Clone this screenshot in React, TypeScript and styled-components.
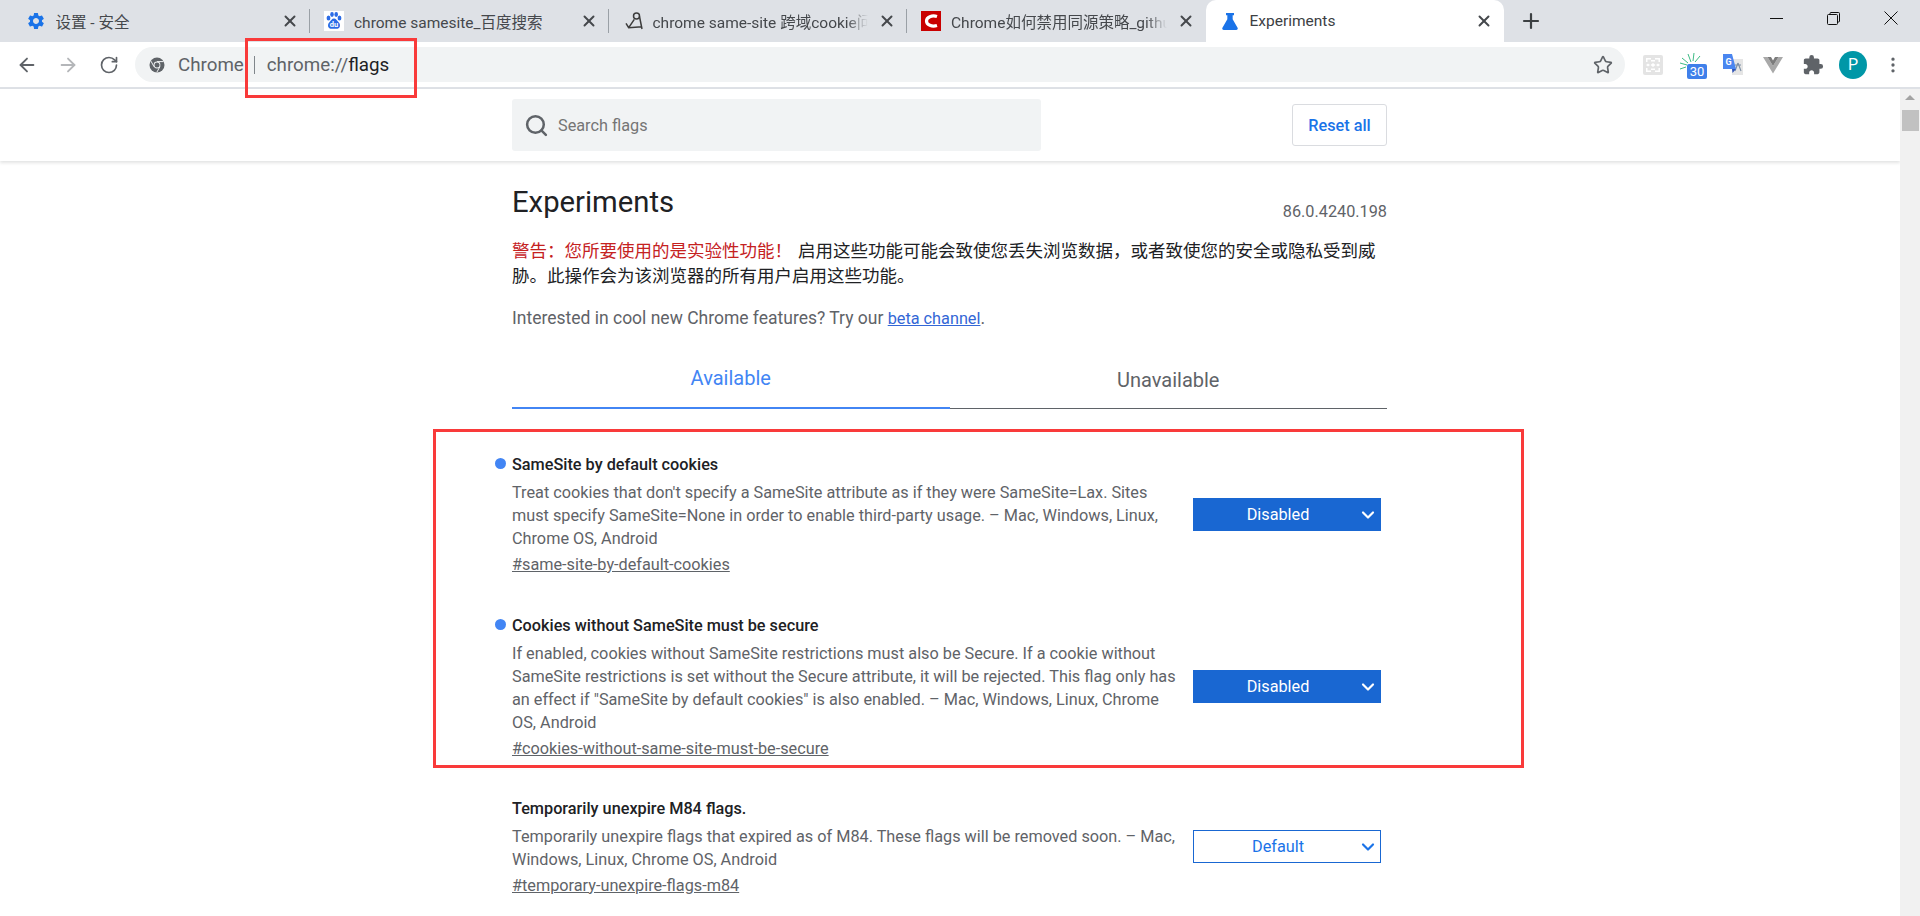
import React from "react";
import styled, { createGlobalStyle } from "styled-components";
import { ArrowLeft, ArrowRight, RotateCw, Star, X, Plus, Search, ChevronDown, EllipsisVertical } from "lucide-react";
import { MdSettings, MdExtension } from "react-icons/md";

const GlobalStyle = createGlobalStyle`
  html, body {
    margin: 0;
    padding: 0;
    background: #fff;
    overflow: hidden;
  }
  * { box-sizing: border-box; }
  body {
    font-family: Roboto, "Noto Sans CJK SC", sans-serif;
  }
`;

const Frame = styled.div`
  position: relative;
  width: 1920px;
  height: 916px;
  overflow: hidden;
  display: flex;
  flex-direction: column;
`;

const TabStrip = styled.div`
  height: 42px;
  background: #dee1e6;
  display: flex;
  align-items: flex-end;
  padding-left: 11.5px;
  flex: none;
`;

const Tab = styled.div<{ $active?: boolean; $sep?: boolean }>`
  position: relative;
  width: 298.5px;
  height: 42px;
  flex: none;
  display: flex;
  align-items: center;
  padding: 0 11px 0 14px;
  gap: 10px;
  font-size: 15.5px;
  color: ${(p) => (p.$active ? "#3c4043" : "#45484c")};
  background: ${(p) => (p.$active ? "#fff" : "transparent")};
  border-radius: ${(p) => (p.$active ? "10px 10px 0 0" : "0")};
  ${(p) =>
    p.$sep
      ? `
    &::after {
      content: "";
      position: absolute;
      right: 0;
      top: 9px;
      width: 1px;
      height: 24px;
      background: #9aa0a6;
    }
  `
      : ""}
`;

const TabIcon = styled.div`
  width: 20px;
  height: 20px;
  flex: none;
  display: flex;
  align-items: center;
  justify-content: center;
`;

const TabTitle = styled.div<{ $fade?: boolean }>`
  flex: 1;
  min-width: 0;
  white-space: nowrap;
  overflow: hidden;
  ${(p) =>
    p.$fade
      ? "mask-image: linear-gradient(to right, #000 90%, transparent 100%);"
      : ""}
`;

const TabClose = styled(X)`
  flex: none;
  color: #45484c;
`;

const NewTab = styled.div`
  width: 38px;
  height: 42px;
  margin-left: 8px;
  display: flex;
  align-items: center;
  justify-content: center;
  color: #3c4043;
`;

const WindowControls = styled.div`
  margin-left: auto;
  height: 36px;
  display: flex;
  align-items: center;
  padding-right: 22px;
  gap: 44px;
  align-self: flex-start;
`;

const Toolbar = styled.div`
  height: 47px;
  flex: none;
  background: #fff;
  border-bottom: 2px solid #dee1e6;
  display: flex;
  align-items: flex-start;
  padding: 5px 0 0 6.5px;
`;

const NavButton = styled.div<{ $dim?: boolean }>`
  width: 41px;
  height: 35px;
  display: flex;
  align-items: center;
  justify-content: center;
  color: ${(p) => (p.$dim ? "#b4b6b9" : "#5f6368")};
`;

const Omnibox = styled.div`
  margin-left: 5.5px;
  width: 1490px;
  height: 35px;
  background: #f1f3f4;
  border-radius: 18px;
  display: flex;
  align-items: center;
  padding: 0 12px 0 14px;
  font-size: 18.75px;
`;

const SecureLabel = styled.span`
  color: #5f6368;
  margin-left: 13px;
  padding-top: 1px;
`;

const Divider = styled.span`
  width: 1px;
  height: 18px;
  background: #80868b;
  margin: 0 12px 0 10px;
`;

const UrlScheme = styled.span`
  color: #5f6368;
  padding-top: 1px;
`;

const UrlHost = styled.span`
  color: #202124;
  padding-top: 1px;
`;

const StarSlot = styled.div`
  margin-left: auto;
  color: #5f6368;
  display: flex;
`;

const Extensions = styled.div`
  display: flex;
  height: 35px;
  align-items: center;
  margin-left: 8px;
`;

const ExtSlot = styled.div`
  width: 40px;
  height: 35px;
  display: flex;
  align-items: center;
  justify-content: center;
  color: #5f6368;
`;

const Avatar = styled.div`
  width: 28px;
  height: 28px;
  border-radius: 50%;
  background: #0097a7;
  color: #fff;
  font-size: 16px;
  display: flex;
  align-items: center;
  justify-content: center;
`;

const Viewport = styled.div`
  flex: 1;
  display: flex;
  min-height: 0;
`;

const Page = styled.div`
  flex: 1;
  min-width: 0;
  display: flex;
  flex-direction: column;
`;

const Scrollbar = styled.div`
  width: 20px;
  flex: none;
  background: #f1f1f1;
  display: flex;
  flex-direction: column;
  align-items: center;
  padding-top: 6px;
`;

const ScrollArrow = styled.div`
  width: 0;
  height: 0;
  border-left: 5px solid transparent;
  border-right: 5px solid transparent;
  border-bottom: 5px solid #a3a3a3;
`;

const ScrollThumb = styled.div`
  width: 17px;
  height: 21px;
  background: #c1c1c1;
  margin-top: 10px;
`;

const FlagsHeader = styled.div`
  height: 72px;
  flex: none;
  padding: 10px 513px 0 512px;
  display: flex;
  justify-content: space-between;
  box-shadow: 0 2px 3px rgba(60, 64, 67, 0.14);
`;

const SearchBox = styled.div`
  width: 529px;
  height: 52px;
  background: #f1f3f4;
  border-radius: 3px;
  display: flex;
  align-items: center;
  padding-left: 12px;
  gap: 9px;
  font-size: 16.25px;
  color: #757575;
`;

const ResetButton = styled.div`
  width: 95px;
  height: 42px;
  margin-top: 5px;
  border: 1px solid #dadce0;
  border-radius: 3px;
  display: flex;
  align-items: center;
  justify-content: center;
  font-size: 16.25px;
  font-weight: 500;
  color: #1a73e8;
`;

const Content = styled.div`
  width: 875px;
  margin-left: 512px;
`;

const TitleRow = styled.div`
  display: flex;
  justify-content: space-between;
  padding-top: 22px;
  height: 78px;
`;

const Title = styled.h1`
  margin: 0;
  font-size: 29.25px;
  line-height: 38px;
  font-weight: 400;
  color: #202124;
`;

const Version = styled.div`
  font-size: 16.25px;
  line-height: 18px;
  color: #5f6368;
  margin-top: 20px;
`;

const Warning = styled.p`
  margin: 0;
  font-size: 17.5px;
  line-height: 25px;
  color: #202124;
`;

const WarningLead = styled.span`
  color: #c5221f;
  margin-right: 6px;
`;

const Promo = styled.p`
  margin: 17px 0 0;
  font-size: 17.5px;
  line-height: 25px;
  color: #5f6368;
`;

const BetaLink = styled.a`
  color: #3367d6;
  font-size: 16.25px;
  text-decoration: underline;
`;

const TabsRow = styled.div`
  display: flex;
  margin-top: 19px;
  height: 59px;
`;

const FlagTab = styled.div<{ $active?: boolean }>`
  flex: 1;
  display: flex;
  justify-content: center;
  font-size: 20px;
  line-height: 24px;
  padding-top: ${(p) => (p.$active ? "16px" : "18px")};
  color: ${(p) => (p.$active ? "#4285f4" : "#5f6368")};
  border-bottom: ${(p) => (p.$active ? "2px solid #4285f4" : "1px solid #5f6368")};
  height: ${(p) => (p.$active ? "59px" : "58.5px")};
`;

const FlagList = styled.div`
  display: flex;
  flex-direction: column;
  padding-top: 47px;
`;

const FlagRow = styled.div<{ $height: number }>`
  display: flex;
  height: ${(p) => p.$height}px;
`;

const FlagText = styled.div`
  width: 668px;
  margin-right: 13px;
  flex: none;
`;

const FlagName = styled.div<{ $changed?: boolean }>`
  position: relative;
  font-size: 16.25px;
  line-height: 18px;
  font-weight: 500;
  color: #202124;
  ${(p) =>
    p.$changed
      ? `
    &::before {
      content: "";
      position: absolute;
      left: -17px;
      top: 2px;
      width: 11px;
      height: 11px;
      border-radius: 50%;
      background: #4285f4;
    }
  `
      : ""}
`;

const FlagDesc = styled.div`
  margin-top: 7px;
  font-size: 16.25px;
  line-height: 23px;
  color: #5f6368;
`;

const FlagLink = styled.a`
  display: block;
  margin-top: 3.5px;
  font-size: 16.25px;
  line-height: 22px;
  color: #5f6368;
  text-decoration: underline;
`;

const SelectBox = styled.div<{ $on?: boolean; $top: number }>`
  margin-top: ${(p) => p.$top}px;
  width: 188px;
  height: 33px;
  position: relative;
  display: flex;
  align-items: center;
  justify-content: center;
  padding-right: 18px;
  font-size: 16.25px;
  border: 1px solid #1967d2;
  background: ${(p) => (p.$on ? "#1967d2" : "#fff")};
  color: ${(p) => (p.$on ? "#fff" : "#1a73e8")};
`;

const SelectArrow = styled(ChevronDown)`
  position: absolute;
  right: 2px;
  top: 6px;
`;

const Annotation = styled.div<{ $x: number; $y: number; $w: number; $h: number }>`
  position: absolute;
  left: ${(p) => p.$x}px;
  top: ${(p) => p.$y}px;
  width: ${(p) => p.$w}px;
  height: ${(p) => p.$h}px;
  border: 3px solid #f93a3a;
  pointer-events: none;
`;

const BaiduIcon = () => (
  <svg width="20" height="20" viewBox="0 0 20 20">
    <rect width="20" height="20" fill="#fff" />
    <g fill="#2b6be6">
      <ellipse cx="4.500" cy="7" rx="1.900" ry="2.500" />
      <ellipse cx="8" cy="3.500" rx="1.800" ry="2.400" />
      <ellipse cx="12.200" cy="3.500" rx="1.800" ry="2.400" />
      <ellipse cx="15.500" cy="7" rx="1.900" ry="2.500" />
      <path d="M10 7.500c-2.200 0-2.800 2.200-4.400 3.400C3.900 12.300 3.500 14.700 4.600 16.600c1 1.600 3 1.200 5.400 1.100 2.400.1 4.400.5 5.400-1.100 1.100-1.900.7-4.300-1-5.700C12.800 9.700 12.200 7.500 10 7.500z" />
    </g>
    <text x="10" y="16.200" textAnchor="middle" fontSize="7.500" fontWeight="700" fill="#fff" fontFamily="Roboto">du</text>
  </svg>
);

const SketchIcon = () => (
  <svg width="20" height="20" viewBox="0 0 20 20" fill="none" stroke="#3c3c3c" strokeWidth="1.500">
    <circle cx="13.500" cy="5" r="3" />
    <path d="M16.500 5.500L19 18M3 12.300l2.700 4.400L19 15.700M5.700 16.700l5.600-8.400" />
  </svg>
);

const CsdnIcon = () => (
  <svg width="20" height="20" viewBox="0 0 20 20">
    <rect width="20" height="20" fill="#c90000" />
    <path d="M16 5.500C11 4 5.500 6 5.500 10s5.500 6 10.500 4.500" fill="none" stroke="#fff" strokeWidth="3.200" />
  </svg>
);

const FlaskIcon = () => (
  <svg width="16" height="17" viewBox="0 0 18 19">
    <path d="M4.500 0h9v2.500H12V7l5.500 9.500c.6 1.100-.1 2.500-1.400 2.500H1.900C.6 19-.1 17.600.5 16.500L6 7V2.500H4.500z" fill="#1a73e8" />
  </svg>
);

const ChromeGlyph = () => (
  <svg width="16" height="16" viewBox="0 0 16 16">
    <circle cx="8" cy="8" r="7.500" fill="#5f6368" />
    <circle cx="8" cy="8" r="3.400" fill="#f1f3f4" />
    <circle cx="8" cy="8" r="2.500" fill="#5f6368" />
    <path d="M8 4.600h6.500M5 9.700L2 4.200M10.900 9.700L7.800 15.300" stroke="#f1f3f4" strokeWidth="1" />
  </svg>
);

const QrExt = () => (
  <svg width="20" height="20" viewBox="0 0 20 20">
    <rect width="20" height="20" rx="2" fill="#e4e4e4" />
    <path d="M3 3h5v1.500H4.500V7H3zM12 3h5v4h-1.500V4.500H12zM3 13h1.500v2.500H8V17H3zM15.500 13H17v4h-5v-1.500h3.500zM3 10l2-1.500 2 1.500-2 1.500zM7.500 10L10 8l2.500 2-2.500 2zM13 10l2-1.500 2 1.500-2 1.500zM8 5h4v1.500H8zM8 13.500h4V15H8z" fill="#fff" />
  </svg>
);

const BadgeExt = () => (
  <svg width="28" height="28" viewBox="0 0 28 28">
    <path d="M1 12l7 2M3 7l6 5M9 3l3 8M15 2l-1 8M21 5l-5 6M1 18l6-2" stroke="#3dbb85" strokeWidth="1" />
    <rect x="8" y="13" width="20" height="15" rx="2" fill="#3f80ea" />
    <text x="18" y="25" textAnchor="middle" fontSize="13" fill="#fff" fontFamily="Roboto">30</text>
  </svg>
);

const TranslateExt = () => (
  <svg width="22" height="22" viewBox="0 0 22 22">
    <rect x="10" y="5" width="11" height="16" fill="#e5e5e5" />
    <path d="M16 9l-3 8M16 9l3 8M13 11h6" stroke="#7d8fa5" strokeWidth="1.100" fill="none" />
    <path d="M1 0h9l4 15H1z" fill="#4a86f0" />
    <path d="M10 15h4l-3.500 4z" fill="#2f53b8" />
    <text x="6.500" y="11" textAnchor="middle" fontSize="9" fontWeight="700" fill="#fff" fontFamily="Roboto">G</text>
  </svg>
);

const VueExt = () => (
  <svg width="20" height="18" viewBox="0 0 20 18">
    <path d="M0 1h4.500L10 10l5.500-9H20L10 17.500z" fill="#a9a9a9" />
    <path d="M4.500 1H8l2 3.500L12 1h3.500L10 10z" fill="#7c7c7c" />
  </svg>
);

const RestoreIcon = () => (
  <svg width="13" height="13" viewBox="0 0 13 13" fill="none" stroke="#111" strokeWidth="1">
    <rect x="0.500" y="2.500" width="10" height="10" rx="1" />
    <path d="M3 2.500V1.500a1 1 0 0 1 1-1h7.500a1 1 0 0 1 1 1V9a1 1 0 0 1-1 1h-1" />
  </svg>
);

const CloseWin = () => (
  <svg width="14" height="14" viewBox="0 0 14 14" stroke="#111" strokeWidth="1">
    <path d="M0.500 0.500l13 13M13.500 0.500l-13 13" />
  </svg>
);

const MinWin = () => (
  <svg width="13" height="13" viewBox="0 0 13 13" stroke="#111" strokeWidth="1">
    <path d="M0 6.500h13" />
  </svg>
);

const tabs = [
  { title: "设置 - 安全", icon: <MdSettings size={22} color="#1a73e8" /> },
  { title: "chrome samesite_百度搜索", icon: <BaiduIcon /> },
  { title: "chrome same-site 跨域cookie问题", icon: <SketchIcon />, fade: true },
  { title: "Chrome如何禁用同源策略_github", icon: <CsdnIcon />, fade: true },
];

const flags = [
  {
    name: "SameSite by default cookies",
    desc: "Treat cookies that don't specify a SameSite attribute as if they were SameSite=Lax. Sites must specify SameSite=None in order to enable third-party usage. – Mac, Windows, Linux, Chrome OS, Android",
    link: "#same-site-by-default-cookies",
    value: "Disabled",
    changed: true,
    height: 161,
    top: 42,
  },
  {
    name: "Cookies without SameSite must be secure",
    desc: 'If enabled, cookies without SameSite restrictions must also be Secure. If a cookie without SameSite restrictions is set without the Secure attribute, it will be rejected. This flag only has an effect if "SameSite by default cookies" is also enabled. – Mac, Windows, Linux, Chrome OS, Android',
    link: "#cookies-without-same-site-must-be-secure",
    value: "Disabled",
    changed: true,
    height: 183,
    top: 53,
  },
  {
    name: "Temporarily unexpire M84 flags.",
    desc: "Temporarily unexpire flags that expired as of M84. These flags will be removed soon. – Mac, Windows, Linux, Chrome OS, Android",
    link: "#temporary-unexpire-flags-m84",
    value: "Default",
    changed: false,
    height: 110,
    top: 30,
  },
];

export default function App() {
  return (
    <Frame>
      <GlobalStyle />
      <TabStrip>
        {tabs.map((t, i) => (
          <Tab key={i} $sep={i < 3}>
            <TabIcon>{t.icon}</TabIcon>
            <TabTitle $fade={t.fade}>{t.title}</TabTitle>
            <TabClose size={18} strokeWidth={2.6} />
          </Tab>
        ))}
        <Tab $active>
          <TabIcon>
            <FlaskIcon />
          </TabIcon>
          <TabTitle>Experiments</TabTitle>
          <TabClose size={18} strokeWidth={2.6} />
        </Tab>
        <NewTab>
          <Plus size={24} strokeWidth={2.2} />
        </NewTab>
        <WindowControls>
          <MinWin />
          <RestoreIcon />
          <CloseWin />
        </WindowControls>
      </TabStrip>
      <Toolbar>
        <NavButton>
          <ArrowLeft size={22} />
        </NavButton>
        <NavButton $dim>
          <ArrowRight size={22} />
        </NavButton>
        <NavButton>
          <RotateCw size={20} />
        </NavButton>
        <Omnibox>
          <ChromeGlyph />
          <SecureLabel>Chrome</SecureLabel>
          <Divider />
          <UrlScheme>chrome://</UrlScheme>
          <UrlHost>flags</UrlHost>
          <StarSlot>
            <Star size={20} />
          </StarSlot>
        </Omnibox>
        <Extensions>
          <ExtSlot>
            <QrExt />
          </ExtSlot>
          <ExtSlot>
            <BadgeExt />
          </ExtSlot>
          <ExtSlot>
            <TranslateExt />
          </ExtSlot>
          <ExtSlot>
            <VueExt />
          </ExtSlot>
          <ExtSlot>
            <MdExtension size={22} />
          </ExtSlot>
          <ExtSlot>
            <Avatar>P</Avatar>
          </ExtSlot>
          <ExtSlot>
            <EllipsisVertical size={20} />
          </ExtSlot>
        </Extensions>
      </Toolbar>
      <Viewport>
        <Page>
          <FlagsHeader>
            <SearchBox>
              <Search size={25} strokeWidth={2.4} color="#5f6368" />
              Search flags
            </SearchBox>
            <ResetButton>Reset all</ResetButton>
          </FlagsHeader>
          <Content>
            <TitleRow>
              <Title>Experiments</Title>
              <Version>86.0.4240.198</Version>
            </TitleRow>
            <Warning>
              <WarningLead>警告：您所要使用的是实验性功能！</WarningLead>
              启用这些功能可能会致使您丢失浏览数据，或者致使您的安全或隐私受到威胁。此操作会为该浏览器的所有用户启用这些功能。
            </Warning>
            <Promo>
              Interested in cool new Chrome features? Try our <BetaLink>beta channel</BetaLink>.
            </Promo>
            <TabsRow>
              <FlagTab $active>Available</FlagTab>
              <FlagTab>Unavailable</FlagTab>
            </TabsRow>
            <FlagList>
              {flags.map((f) => (
                <FlagRow key={f.link} $height={f.height}>
                  <FlagText>
                    <FlagName $changed={f.changed}>{f.name}</FlagName>
                    <FlagDesc>{f.desc}</FlagDesc>
                    <FlagLink>{f.link}</FlagLink>
                  </FlagText>
                  <SelectBox $on={f.changed} $top={f.top}>
                    {f.value}
                    <SelectArrow size={20} strokeWidth={2.6} />
                  </SelectBox>
                </FlagRow>
              ))}
            </FlagList>
          </Content>
        </Page>
        <Scrollbar>
          <ScrollArrow />
          <ScrollThumb />
        </Scrollbar>
      </Viewport>
      <Annotation $x={245} $y={38} $w={172} $h={60} />
      <Annotation $x={433} $y={429} $w={1091} $h={339} />
    </Frame>
  );
}
